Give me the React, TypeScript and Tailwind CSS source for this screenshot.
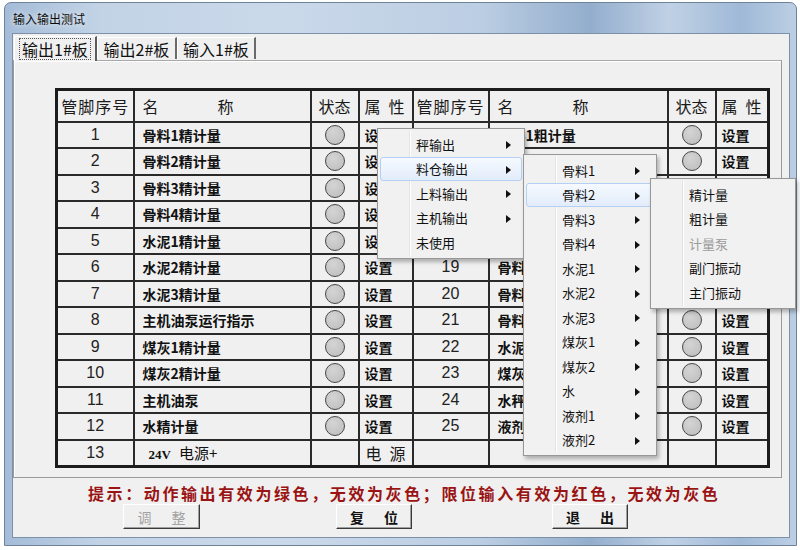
import React from "react";

type Item = { label: string; arrow?: boolean; hl?: boolean; disabled?: boolean };

const leftNames = [
  "骨料1精计量",
  "骨料2精计量",
  "骨料3精计量",
  "骨料4精计量",
  "水泥1精计量",
  "水泥2精计量",
  "水泥3精计量",
  "主机油泵运行指示",
  "煤灰1精计量",
  "煤灰2精计量",
  "主机油泵",
  "水精计量",
];
const rightNames = [
  "骨料1粗计量",
  "骨料2粗计量",
  "骨料3粗计量",
  "骨料4粗计量",
  "水泥1粗计量",
  "骨料1卸料",
  "骨料2卸料",
  "骨料3卸料",
  "水泥卸料",
  "煤灰卸料",
  "水秤卸料",
  "液剂卸料",
];

function Arrow() {
  return (
    <svg width="5" height="8" viewBox="0 0 5 8" className="block">
      <path d="M0 0 L5 4 L0 8 Z" fill="#111" />
    </svg>
  );
}

function MenuItems({ items, arrowPad }: { items: Item[]; arrowPad: string }) {
  return (
    <>
      {items.map((it) => (
        <div
          key={it.label}
          className={
            "relative h-[24.5px] flex items-center pl-[35px] rounded-[3px] border " +
            (it.hl
              ? "border-[#b4d0f2] bg-[linear-gradient(#f6faff,#e2ecfa)]"
              : "border-transparent") +
            (it.disabled ? " text-[#9c9c9c]" : " text-[#111]")
          }
        >
          <span className="text-[13px] leading-none">{it.label}</span>
          {it.arrow && <span className={"absolute top-[8px] " + arrowPad}><Arrow /></span>}
        </div>
      ))}
    </>
  );
}

function Circle() {
  return (
    <div className="mx-auto w-[20px] h-[20px] rounded-full bg-[radial-gradient(circle_at_40%_35%,#d4d4d4,#bcbcbc)] border-[1.5px] border-[#474747]" />
  );
}

const td = "border-2 border-[#2a2a2a] p-0";
const numCls = td + " text-center text-[16px] font-['Liberation_Sans',sans-serif] text-[#222]";
const nameCls = td + " pl-[8px] text-[14px] font-bold text-[#111] whitespace-nowrap overflow-hidden";
const setCls = td + " pl-[5px] text-[14px] font-bold text-[#111]";

export default function App() {
  return (
    <div className="relative w-[800px] h-[550px] bg-white overflow-hidden pl-[4px] pt-[2px] font-['Noto_Sans_CJK_SC','Noto_Sans',sans-serif]">
      {/* window */}
      <div className="w-[793px] h-[544px] flex flex-col border border-[#6e8298] rounded-t-[7px] bg-[linear-gradient(90deg,#a4bcd8_0%,#c2d3e6_12%,#cad9ea_35%,#bccee3_60%,#93aecd_74%,#c0d1e5_84%,#9fb9d7_93%,#bccfe4_100%)]">
        <div className="h-[30px] flex items-center pl-[8px] pt-[1px] text-[12px] text-[#0c0c0c] leading-none [text-shadow:0_0_6px_#ffffff]">
          输入输出测试
        </div>
        <div className="flex-1 ml-[7px] mr-[6px] mb-[7px] border border-[#7c90a8] bg-[#f0f0f0] flex flex-col">
          {/* tabs */}
          <div className="h-[26px] flex items-end pl-[1px] text-[16px] leading-none text-[#111]">
            <div className="relative z-10 w-[83px] h-[25px] flex items-center justify-center bg-[#f0f0f0] border-t border-l border-white border-r-2 border-r-[#5c5c5c] mb-[-1px]">
              <span className="border border-dotted border-[#555] px-[2px] py-[2px]">输出1#板</span>
            </div>
            <div className="w-[80px] h-[22px] flex items-center justify-center border-t border-l border-white border-r-2 border-r-[#6a6a6a] mb-[1px]">
              输出2#板
            </div>
            <div className="w-[79px] h-[22px] flex items-center justify-center border-t border-l border-white border-r-2 border-r-[#6a6a6a] mb-[1px]">
              输入1#板
            </div>
          </div>
          {/* panel */}
          <div className="w-[769px] h-[418px] border border-[#9b9b9b] border-t-[#a8a8a8] shadow-[inset_1px_1px_0_#ffffff] bg-[#f0f0f0] pl-[41px] pt-[27px]">
            <table className="table-fixed border-collapse border-[3px] border-[#1c1c1c] w-[712px] bg-[#f0f0f0]">
              <colgroup>
                <col className="w-[77px]" />
                <col className="w-[177px]" />
                <col className="w-[48px]" />
                <col className="w-[54px]" />
                <col className="w-[76px]" />
                <col className="w-[179px]" />
                <col className="w-[48px]" />
                <col className="w-[53px]" />
              </colgroup>
              <thead>
                <tr className="h-[32px] text-[16px] font-normal text-[#1a1a1a] leading-none">
                  <th className={td + " font-normal text-center tracking-[1px]"}>管脚序号</th>
                  <th className={td + " font-normal text-left pl-[8px]"}>
                    名<span className="ml-[59px]">称</span>
                  </th>
                  <th className={td + " font-normal text-center"}>状态</th>
                  <th className={td + " font-normal text-left pl-[5px]"}>
                    属<span className="ml-[8px]">性</span>
                  </th>
                  <th className={td + " font-normal text-center tracking-[1px]"}>管脚序号</th>
                  <th className={td + " font-normal text-left pl-[8px]"}>
                    名<span className="ml-[59px]">称</span>
                  </th>
                  <th className={td + " font-normal text-center"}>状态</th>
                  <th className={td + " font-normal text-left pl-[5px]"}>
                    属<span className="ml-[8px]">性</span>
                  </th>
                </tr>
              </thead>
              <tbody>
                {leftNames.map((n, i) => (
                  <tr key={i} className="h-[26.5px] leading-none">
                    <td className={numCls}>{i + 1}</td>
                    <td className={nameCls}>{n}</td>
                    <td className={td}><Circle /></td>
                    <td className={setCls}>设置</td>
                    <td className={numCls}>{i + 14}</td>
                    <td className={nameCls}>{rightNames[i]}</td>
                    <td className={td}><Circle /></td>
                    <td className={setCls}>设置</td>
                  </tr>
                ))}
                <tr className="h-[26.5px] leading-none">
                  <td className={numCls}>13</td>
                  <td className={td + " pl-[14px] text-[13px] font-bold text-[#111]"}>
                    <span className="font-['Liberation_Serif',serif]">24V</span>
                    <span className="ml-[8px] font-normal text-[15px]">电源+</span>
                  </td>
                  <td className={td}></td>
                  <td className={td + " pl-[6px] text-[16px] text-[#1a1a1a]"}>
                    电<span className="ml-[8px]">源</span>
                  </td>
                  <td className={td}></td>
                  <td className={td}></td>
                  <td className={td}></td>
                  <td className={td}></td>
                </tr>
              </tbody>
            </table>
          </div>
          {/* hint */}
          <div className="mt-[6px] h-[18px] ml-[75px] flex items-center text-[16px] leading-none font-bold tracking-[2.6px] text-[#9a1414] whitespace-nowrap">
            提示：动作输出有效为绿色，无效为灰色；限位输入有效为红色，无效为灰色
          </div>
          {/* buttons */}
          <div className="mt-[2px] flex text-[14px] leading-none">
            <div className="ml-[110px] w-[77px] h-[25px] flex items-center justify-center border border-t-white border-l-white border-r-[#3a3a3a] border-b-[#3a3a3a] shadow-[inset_-1px_-1px_0_#a0a0a0] text-[#a3a3a3]">
              调<span className="ml-[20px]">整</span>
            </div>
            <div className="ml-[136px] w-[76px] h-[25px] flex items-center justify-center border border-t-white border-l-white border-r-[#3a3a3a] border-b-[#3a3a3a] shadow-[inset_-1px_-1px_0_#a0a0a0] font-bold text-[#111]">
              复<span className="ml-[20px]">位</span>
            </div>
            <div className="ml-[140px] w-[76px] h-[25px] flex items-center justify-center border border-t-white border-l-white border-r-[#3a3a3a] border-b-[#3a3a3a] shadow-[inset_-1px_-1px_0_#a0a0a0] font-bold text-[#111]">
              退<span className="ml-[20px]">出</span>
            </div>
          </div>
        </div>
      </div>

      {/* context menus */}
      <div className="absolute left-[377px] top-[128px] w-[148px] border border-[#979797] bg-[#f1f1f1] shadow-[2px_3px_4px_rgba(0,0,0,0.28)] py-[3px] px-[2px]">
        <div className="absolute left-[31px] top-[2px] bottom-[2px] w-[2px] border-l border-[#e2e3e3] border-r border-r-white" />
        <MenuItems
          arrowPad="right-[10px]"
          items={[
            { label: "秤输出", arrow: true },
            { label: "料仓输出", arrow: true, hl: true },
            { label: "上料输出", arrow: true },
            { label: "主机输出", arrow: true },
            { label: "未使用" },
          ]}
        />
      </div>
      <div className="absolute left-[523px] top-[154px] w-[134px] border border-[#979797] bg-[#f1f1f1] shadow-[2px_3px_4px_rgba(0,0,0,0.28)] py-[3px] px-[2px]">
        <div className="absolute left-[31px] top-[2px] bottom-[2px] w-[2px] border-l border-[#e2e3e3] border-r border-r-white" />
        <MenuItems
          arrowPad="right-[13px]"
          items={[
            { label: "骨料1", arrow: true },
            { label: "骨料2", arrow: true, hl: true },
            { label: "骨料3", arrow: true },
            { label: "骨料4", arrow: true },
            { label: "水泥1", arrow: true },
            { label: "水泥2", arrow: true },
            { label: "水泥3", arrow: true },
            { label: "煤灰1", arrow: true },
            { label: "煤灰2", arrow: true },
            { label: "水", arrow: true },
            { label: "液剂1", arrow: true },
            { label: "液剂2", arrow: true },
          ]}
        />
      </div>
      <div className="absolute left-[650px] top-[178px] w-[146px] border border-[#979797] bg-[#f1f1f1] shadow-[2px_3px_4px_rgba(0,0,0,0.28)] py-[3px] px-[2px]">
        <div className="absolute left-[31px] top-[2px] bottom-[2px] w-[2px] border-l border-[#e2e3e3] border-r border-r-white" />
        <MenuItems
          arrowPad="right-[13px]"
          items={[
            { label: "精计量" },
            { label: "粗计量" },
            { label: "计量泵", disabled: true },
            { label: "副门振动" },
            { label: "主门振动" },
          ]}
        />
      </div>
    </div>
  );
}
